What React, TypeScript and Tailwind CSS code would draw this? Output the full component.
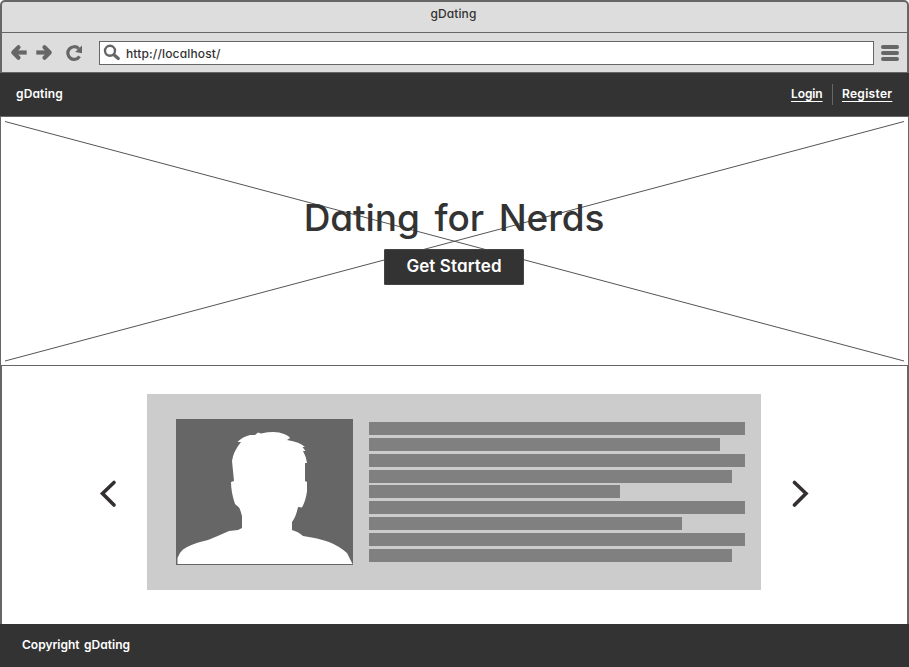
import type { ReactNode } from "react";

const lineWidths = [
  "w-[376px]",
  "w-[351px]",
  "w-[376px]",
  "w-[363px]",
  "w-[251px]",
  "w-[376px]",
  "w-[313px]",
  "w-[376px]",
  "w-[363px]",
];

function BrowserBar() {
  return (
    <div className="h-[73px] rounded-t-[5px] border-x-2 border-t-2 border-b border-[#666] bg-[#ddd]">
      <div className="flex h-[31px] justify-center border-b border-[#666] pt-0.5 pr-0.5">
        <span className="text-[12px] leading-5 font-medium tracking-[0.1px]">gDating</span>
      </div>
      <div className="flex h-[39px] items-center">
        <svg className="h-[39px] w-[97px] shrink-0" viewBox="2 33 97 39" fill="none" stroke="#666" strokeWidth="4.2">
          <path d="M18.500 47.200 13.300 52.500l5.200 5.300" strokeLinecap="round" strokeLinejoin="round" />
          <path d="M14 52.500h12.700" />
          <path d="M44.500 47.200l5.200 5.300-5.200 5.300" strokeLinecap="round" strokeLinejoin="round" />
          <path d="M49 52.500H36.300" />
          <path d="M79.500 56.300a6.300 6.300 0 1 1-.8-7.600" strokeWidth="3.2" />
          <path d="M82 45.500v7.800l-6.800-1.300z" fill="#666" stroke="none" />
        </svg>
        <div className="flex h-6 w-[775px] items-center border border-[#666] bg-white">
          <svg className="h-[22px] w-[26px] shrink-0" viewBox="100 42 26 22" fill="none" stroke="#666" strokeLinecap="round">
            <circle cx="110" cy="50.800" r="5" strokeWidth="2.400" />
            <path d="M114.500 55.300l3.800 3.200" strokeWidth="3.200" />
          </svg>
          <span className="mt-0.5 text-[12px] leading-5 font-medium tracking-[0.15px]">http://localhost/</span>
        </div>
        <div className="ml-[7px] flex w-[18px] flex-col gap-0.5">
          <i className="h-1 rounded-full bg-[#666]" />
          <i className="h-1 rounded-full bg-[#666]" />
          <i className="h-1 rounded-full bg-[#666]" />
        </div>
      </div>
    </div>
  );
}

function Arrow({ children }: { children: ReactNode }) {
  return (
    <svg className="h-[30px] w-[18px]" viewBox="0 0 18 30" fill="none" stroke="#332f2f" strokeWidth="3.600" strokeLinecap="round">
      {children}
    </svg>
  );
}

function Avatar() {
  return (
    <svg className="h-[146px] w-[177px] shrink-0" viewBox="0 0 177 146">
      <path fill="#666" d="M0 0h177v146H0z" />
      <path
        fill="#fff"
        d="M1.500 145V139Q3 134 7 130.500Q14 125.500 28 122L32 121Q42 117 53 112L62 111L66 109V97Q64.500 91 63 88.500L59 85Q55 73 55 63L58 62L56 42Q57 33 65 23L61.500 23Q66 18 74 16L79 16L82 13.500L85 14.500Q100 11.500 108 15Q113 17 114 19L111 21Q124 23 129 28H126.500L129.500 32H127Q130 37 131 44H129V62L131 63V72Q130 81 126 88.500L122 88Q120 98 116 103V111Q123 113 127 117Q142 119 153 123Q163 127 171 134Q174 140 176.500 145Z"
      />
    </svg>
  );
}

export default function App() {
  return (
    <div className="flex h-[667px] w-[909px] flex-col overflow-hidden bg-white font-['Inter',sans-serif] text-[#333] [font-feature-settings:'cv11'_1]">
      <BrowserBar />
      <header className="flex h-[43px] items-center justify-between bg-[#333] pr-[17px] pl-4 text-[12px] leading-5 font-semibold text-white">
        <span className="-mt-0.5 tracking-[0.15px]">gDating</span>
        <nav className="flex items-center">
          <a className="-mt-0.5 w-[31px] tracking-[-0.1px] underline decoration-1 underline-offset-[3px]">Login</a>
          <span className="mr-[9px] ml-2.5 h-[21px] w-px bg-[#666]" />
          <a className="-mt-0.5 w-[50px] tracking-[0.3px] underline decoration-1 underline-offset-[3px]">Register</a>
        </nav>
      </header>
      <section className="relative h-[250px] border border-[#666]">
        <svg className="absolute inset-0 h-[248px] w-[907px]" viewBox="1 117 907 248" stroke="#555" strokeWidth="1">
          <path d="M5 121.500 904 361M5 361 904 121.500" />
        </svg>
        <div className="relative flex flex-col items-center pt-[76px] pr-px">
          <h1 className="h-[56px] text-[37px] leading-[50px] font-medium tracking-[-0.1px] whitespace-nowrap [word-spacing:5px]">Dating for Nerds</h1>
          <button className="h-9 w-[140px] rounded-[1px] border border-[#444] bg-[#333] pb-0.5 text-[17px] leading-6 font-semibold tracking-[0.1px] text-white">
            Get Started
          </button>
        </div>
      </section>
      <main className="flex h-[258px] items-start border-x-2 border-[#666] pt-7 pl-[97px]">
        <div className="mt-[85px] h-[30px] w-[18px]">
          <Arrow><path d="M15 3.500 3.500 14.500 15 26" /></Arrow>
        </div>
        <article className="ml-[30px] flex h-[196px] w-[614px] items-start bg-[#ccc] pt-[25px] pl-[29px]">
          <Avatar />
          <div className="mt-[3px] ml-4 flex flex-col gap-[2.85px]">
            {lineWidths.map((width, i) => (
              <div key={i} className={`h-[13px] bg-[#808080] ${width}`} />
            ))}
          </div>
        </article>
        <div className="mt-[85px] ml-[31px] h-[30px] w-[18px]">
          <Arrow><path d="M2.500 3.500 14 14.500 2.500 26" /></Arrow>
        </div>
      </main>
      <footer className="h-[43px] bg-[#333] pt-[11px] pl-[22px] text-[12px] leading-5 font-semibold text-white [word-spacing:1.5px]">
        Copyright gDating
      </footer>
    </div>
  );
}
